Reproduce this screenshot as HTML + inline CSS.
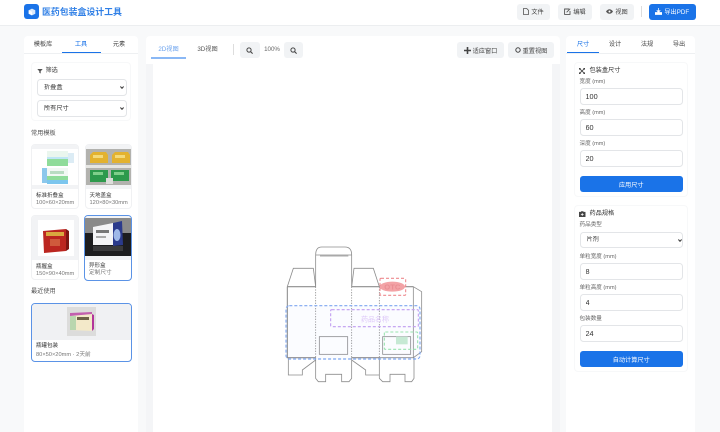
<!DOCTYPE html>
<html lang="zh"><head><meta charset="utf-8"><title>医药包装盒设计工具</title>
<style>
*{box-sizing:border-box;margin:0;padding:0}
html,body{width:720px;height:432px;overflow:hidden;background:#f8f9fa}
body{position:relative;font-family:"Liberation Sans","Noto Sans CJK SC",sans-serif;color:#333;font-size:6.2px}
#w{position:absolute;left:0;top:0;width:720px;height:432px;filter:blur(.35px)}
.a{position:absolute}
.t{position:absolute;white-space:nowrap;line-height:1}
.c{transform:translateX(-50%)}
.btn{position:absolute;background:#f1f3f5;border-radius:3px;display:flex;align-items:center;justify-content:center;gap:2px;font-size:6.2px;color:#444;white-space:nowrap}
.blue{background:#1a73e8;color:#fff;border-radius:3px}
.f{position:absolute;left:579.5px;width:103.5px;height:17px;border:1px solid #e3e5e8;border-radius:3.5px;background:#fff;font:7.3px "Liberation Sans",sans-serif;color:#333;padding-left:5px;outline:0}
select.f,select.s{appearance:none;-webkit-appearance:none;font-family:"Liberation Sans","Noto Sans CJK SC",sans-serif;font-size:6.2px}
select.f{padding-left:6px}
.s{position:absolute;left:36.5px;width:90px;height:17px;border:1px solid #e3e5e8;border-radius:3.5px;background:#fff;color:#333;padding-left:6.5px;outline:0}
.l{position:absolute;left:579.5px;font-size:5.6px;color:#666;line-height:1;white-space:nowrap}
.card{position:absolute;background:#fff;border:.7px solid #f0f1f3;border-radius:4px;overflow:hidden}
.sel{border:1px solid #5b93e6}
.n{position:absolute;font-size:5.5px;color:#333;line-height:1;white-space:nowrap;left:4px}
.d{position:absolute;font-size:5.7px;color:#777;line-height:1;white-space:nowrap;left:4px}
svg{display:block}
</style></head><body><div id="w">

<!-- header -->
<div class="a" style="left:0;top:0;width:720px;height:25.5px;background:#fff;border-bottom:1px solid #eceef0"></div>
<div class="a blue" style="left:24px;top:4px;width:14.5px;height:14.5px;border-radius:3px"></div>
<svg class="a" style="left:27.5px;top:7.5px" width="8" height="8" viewBox="0 0 8 8"><path d="M4 .6 7.3 2.2v3.6L4 7.4.7 5.8V2.2z" fill="#dbe9fb"/><path d="M4 3.8v3.6L.7 5.8V2.2z" fill="#fff"/></svg>
<div class="t" style="left:42px;top:7.5px;font-size:8.9px;font-weight:700;color:#2f7fe6">医药包装盒设计工具</div>

<div class="btn" style="left:517px;top:4px;width:33px;height:15.5px"><svg width="6" height="7" viewBox="0 0 6 7"><path d="M.5.5h3.2L5.5 2.3v4.2H.5z" fill="none" stroke="#555" stroke-width=".8"/></svg>文件</div>
<div class="btn" style="left:558px;top:4px;width:34px;height:15.5px"><svg width="7" height="7" viewBox="0 0 7 7"><path d="M5 1H.6v5.4H6V3M2.6 4.3 6.2.7" fill="none" stroke="#555" stroke-width=".9"/></svg>编辑</div>
<div class="btn" style="left:600px;top:4px;width:34px;height:15.5px"><svg width="7" height="5" viewBox="0 0 7 5"><path d="M0 2.5C2 -.5 5-.5 7 2.5 5 5.5 2 5.5 0 2.5z" fill="#555"/><circle cx="3.5" cy="2.5" r="1" fill="#fff"/></svg>视图</div>
<div class="a" style="left:641px;top:6px;width:.7px;height:11px;background:#ddd"></div>
<div class="btn blue" style="left:649px;top:3.5px;width:46.5px;height:16.5px;color:#fff"><svg width="7" height="7" viewBox="0 0 7 7"><path d="M3.5 0v4M1.7 2.4 3.5 4.4l1.8-2M.3 4.5v2h6.4v-2z" fill="#fff" stroke="#fff" stroke-width=".7"/></svg>导出PDF</div>

<!-- left panel -->
<div class="a" style="left:24px;top:36px;width:114px;height:396px;background:#fff;border-radius:4px 4px 0 0"></div>
<div class="a" style="left:24px;top:53px;width:114px;height:.8px;background:#eef0f2"></div>
<div class="t c" style="left:43px;top:41.5px;color:#444">模板库</div>
<div class="t c" style="left:81px;top:41.5px;color:#1a73e8">工具</div>
<div class="t c" style="left:119px;top:41.5px;color:#444">元素</div>
<div class="a" style="left:62px;top:52px;width:38.5px;height:1px;background:#1a73e8"></div>

<div class="a" style="left:31px;top:62px;width:100px;height:59px;background:#fff;border:.7px solid #f7f8f9;border-radius:4px"></div>
<svg class="a" style="left:37px;top:68px" width="6" height="6" viewBox="0 0 6 6"><path d="M.3 1h5.4L3.7 3.2V5.5L2.3 4.8V3.2z" fill="#555"/></svg>
<div class="t" style="left:45.5px;top:67.5px;color:#444">筛选</div>
<select class="s" style="top:78.5px"><option>折叠盒</option></select>
<select class="s" style="top:99.5px"><option>所有尺寸</option></select>
<svg class="a" style="left:120px;top:85.5px" width="4" height="3" viewBox="0 0 4 3"><path d="M.4.5 2 2.3 3.6.5" fill="none" stroke="#333" stroke-width="1"/></svg>
<svg class="a" style="left:120px;top:106.5px" width="4" height="3" viewBox="0 0 4 3"><path d="M.4.5 2 2.3 3.6.5" fill="none" stroke="#333" stroke-width="1"/></svg>

<div class="t" style="left:31px;top:130.5px;color:#555">常用模板</div>

<!-- card 1 -->
<div class="card" style="left:31px;top:144px;width:47.5px;height:65px">
 <div class="a" style="left:0;top:0;width:100%;height:44px;background:#f2f3f5"></div>
 <svg class="a" style="left:0;top:4px" width="47" height="36" viewBox="0 0 47 36"><rect width="47" height="36" fill="#fff"/>
  <rect x="15" y="2" width="21" height="15" fill="#eaf6ee"/><rect x="15" y="10" width="21" height="7" fill="#8fdc9a"/><rect x="15" y="8" width="21" height="2" fill="#bfe6f5"/>
  <rect x="36" y="4" width="6" height="10" fill="#dcecf5"/>
  <rect x="10" y="19" width="5" height="15" fill="#8cc8ec"/><rect x="15" y="19" width="21" height="16" fill="#f2f8f4"/><rect x="15" y="27" width="21" height="4" fill="#8fdc9a"/><rect x="15" y="31" width="21" height="4" fill="#7cc6ee"/><rect x="18" y="22" width="14" height="3" fill="#b9dcc2"/>
 </svg>
 <div class="n" style="top:48.5px">标准折叠盒</div><div class="d" style="top:55.5px">100×60×20mm</div>
</div>
<!-- card 2 -->
<div class="card" style="left:84.5px;top:144px;width:47px;height:65px">
 <div class="a" style="left:0;top:0;width:100%;height:44px;background:#f2f3f5"></div>
 <svg class="a" style="left:0;top:4px" width="47" height="36" viewBox="0 0 47 36"><rect width="47" height="36" fill="#b2b2ae"/><rect y="16" width="47" height="3" fill="#e6e6e3"/>
  <path d="M4 6 7 3h13l2 3v8H4z" fill="#e3b22f"/><rect x="7" y="6" width="10" height="3" fill="#f3da7a"/>
  <path d="M26 6l3-3h13l2 3v8H26z" fill="#e3b22f"/><rect x="29" y="6" width="10" height="3" fill="#f3da7a"/>
  <rect x="4" y="21" width="18" height="12" fill="#2d9a4c"/><rect x="25" y="21" width="18" height="11" fill="#2d9a4c"/><rect x="7" y="23" width="10" height="3" fill="#7fcf8a"/><rect x="28" y="23" width="10" height="3" fill="#7fcf8a"/><rect x="20" y="29" width="7" height="6" fill="#dcdeda"/></svg>
 <div class="n" style="top:48.5px">天地盖盒</div><div class="d" style="top:55.5px">120×80×30mm</div>
</div>
<!-- card 3 -->
<div class="card" style="left:31px;top:215px;width:47.5px;height:65px">
 <svg class="a" style="left:0;top:0" width="47" height="44" viewBox="0 0 47 44"><rect width="47" height="44" fill="#f2f3f5"/><rect x="6" y="4" width="36" height="36" fill="#fff"/>
  <path d="M11 15 34 13V35L12 37z" fill="#bb2620"/><path d="M34 13 37 15V33L34 35z" fill="#7c1512"/><path d="M14 16H32V20H14z" fill="#d9a93f"/><rect x="18" y="23" width="10" height="7" fill="#cf5a3c"/></svg>
 <div class="n" style="top:48.5px">瓶握盒</div><div class="d" style="top:55.5px">150×90×40mm</div>
</div>
<!-- card 4 -->
<div class="card sel" style="left:84px;top:215px;width:47.5px;height:65.5px">
 <svg class="a" style="left:0;top:0" width="46" height="44" viewBox="0 0 46 44"><rect width="46" height="44" fill="#f2f3f5"/><rect y="2" width="46" height="15" fill="#8a8a8a"/><rect y="17" width="46" height="23" fill="#1d1d1f"/><path d="M8 11 28 7v22H8z" fill="#f4f4f6"/><path d="M28 7l9-2 1 24-10 1z" fill="#2b3a8c"/><ellipse cx="32" cy="19" rx="3.5" ry="6" fill="#9fb8e8"/><rect x="11" y="14" width="13" height="3" fill="#777"/><rect x="11" y="20" width="10" height="2" fill="#aaa"/><rect x="8" y="30" width="30" height="5" fill="#3a3a3c"/></svg>
 <div class="n" style="top:48px">异形盒</div><div class="d" style="top:55px">定制尺寸</div>
</div>

<div class="t" style="left:31px;top:289px;color:#555">最近使用</div>
<!-- recent -->
<div class="card sel" style="left:31px;top:303px;width:100.5px;height:59px">
 <div class="a" style="left:0;top:0;width:100%;height:36px;background:#f0f1f3"></div>
 <svg class="a" style="left:35px;top:3px" width="29" height="29" viewBox="0 0 29 29"><rect width="29" height="29" fill="#dcdcdb"/><path d="M3 9 25 7V24L3 23z" fill="#f3e9c9"/><path d="M3 9H9V23H3z" fill="#b9d6ae"/><rect x="10" y="10" width="12" height="3" fill="#6e6248"/><path d="M25 7 27 8V22L25 24z" fill="#b3359a"/><path d="M3 6 25 5V7L3 9z" fill="#c25fae"/></svg>
 <div class="n" style="top:40px">瓶罐包装</div><div class="d" style="top:48.5px">80×50×20mm · 2天前</div>
</div>

<!-- center -->
<div class="a" style="left:146px;top:36px;width:414px;height:396px;background:#f4f5f7;border-radius:4px 4px 0 0"></div>
<div class="a" style="left:146px;top:36px;width:414px;height:28px;background:#fff;border-radius:4px 4px 0 0"></div>
<div class="a" style="left:153px;top:64px;width:399px;height:368px;background:#fff"></div>
<div class="t c" style="left:168.5px;top:46.5px;color:#6aa2ee">2D视图</div>
<div class="t c" style="left:207.5px;top:46.5px;color:#555">3D视图</div>
<div class="a" style="left:151px;top:57px;width:35px;height:1.5px;background:#8ab8f5"></div>
<div class="a" style="left:232.5px;top:44px;width:.7px;height:11px;background:#ddd"></div>
<div class="btn" style="left:240px;top:42px;width:19.5px;height:16px"><svg width="7" height="7" viewBox="0 0 7 7"><circle cx="3" cy="3" r="2.1" fill="none" stroke="#444" stroke-width="1"/><path d="M4.6 4.6 6.6 6.6" stroke="#444" stroke-width="1.1"/></svg></div>
<div class="t c" style="left:272px;top:47px;color:#666">100%</div>
<div class="btn" style="left:283.5px;top:42px;width:19.5px;height:16px"><svg width="7" height="7" viewBox="0 0 7 7"><circle cx="3" cy="3" r="2.1" fill="none" stroke="#444" stroke-width="1"/><path d="M4.6 4.6 6.6 6.6" stroke="#444" stroke-width="1.1"/></svg></div>
<div class="btn" style="left:457px;top:42px;width:47px;height:16px"><svg width="7" height="7" viewBox="0 0 7 7"><path d="M3.5 0v7M0 3.5h7" stroke="#444" stroke-width="1.6"/></svg>适应窗口</div>
<div class="btn" style="left:508px;top:42px;width:46px;height:16px"><svg width="6" height="6" viewBox="0 0 6 6"><circle cx="3" cy="3" r="2.2" fill="none" stroke="#444" stroke-width="1"/></svg>重置视图</div>

<!-- dieline -->
<svg class="a" style="left:270px;top:235px" width="170" height="150" viewBox="0 0 510 450">
 <g fill="none" stroke="#8d8d8d" stroke-width="2.4">
  <path d="M52 155H137M245 155H328M52 155V368H137M245 368H328M430 155H328" stroke-width="3.2"/>
  <path d="M137 155V60Q137 36 155 36H225Q245 36 245 60V155"/>
  <path d="M137 60H245M150 63H235"/>
  <path d="M52 155 70 100H130L137 155"/>
  <path d="M245 155 252 100H310L328 155"/>
  <path d="M430 155 455 170V350L430 368"/>
  <path d="M430 155V368H328"/>
  <path d="M55 368V420H97V405L137 375"/>
  <path d="M137 368V430L145 440H167V418H215V440H237L245 430V368"/>
  <path d="M245 375 287 405V420H328"/>
  <path d="M328 368V430L338 440H360V418H405V440H425L432 430V368"/>
  <rect x="148" y="305" width="85" height="53"/>
  <rect x="338" y="305" width="84" height="53"/>
  <g stroke-dasharray="4 4"><path d="M137 155V368M245 155V368M328 155V368"/></g>
 </g>
 <rect x="378" y="305" width="35" height="23" fill="#c9ecd3"/>
 <rect x="48" y="212" width="402" height="160" rx="10" fill="#7fa8f0" fill-opacity=".03" stroke="#7ea6f0" stroke-width="3.4" stroke-dasharray="9 6"/>
 <rect x="182" y="224" width="263" height="51" rx="3" fill="none" stroke="#c09cf0" stroke-width="3.2" stroke-dasharray="9 6"/>
 <rect x="343" y="291" width="100" height="52" rx="3" fill="none" stroke="#98e3ae" stroke-width="3.2" stroke-dasharray="9 6"/>
 <ellipse cx="367" cy="155" rx="38" ry="15" fill="#f3a3a6"/>
 <rect x="330" y="130" width="77" height="51" rx="3" fill="none" stroke="#ee8a8f" stroke-width="3.2" stroke-dasharray="9 6"/>
 <text x="367" y="163" text-anchor="middle" font-family="Liberation Sans,sans-serif" font-size="23" font-weight="700" fill="#e98e93">OTC</text>
 <text x="315" y="260" text-anchor="middle" font-family="Liberation Sans,Noto Sans CJK SC,sans-serif" font-size="21" fill="#dcc6f8">药品名称</text>
</svg>

<!-- right panel -->
<div class="a" style="left:566px;top:36px;width:129px;height:396px;background:#fff;border-radius:4px 4px 0 0"></div>
<div class="a" style="left:566px;top:53px;width:129px;height:.8px;background:#eef0f2"></div>
<div class="t c" style="left:583px;top:41.5px;color:#1a73e8">尺寸</div>
<div class="t c" style="left:615px;top:41.5px;color:#444">设计</div>
<div class="t c" style="left:647px;top:41.5px;color:#444">法规</div>
<div class="t c" style="left:679px;top:41.5px;color:#444">导出</div>
<div class="a" style="left:566.5px;top:52px;width:32.5px;height:1px;background:#1a73e8"></div>

<div class="a" style="left:574px;top:62px;width:114px;height:135px;background:#fff;border:.7px solid #f7f8f9;border-radius:4px"></div>
<svg class="a" style="left:579px;top:67.5px" width="6" height="6" viewBox="0 0 7 7"><path d="M.5.5 6.5 6.5M6.5.5.5 6.5" stroke="#444" stroke-width="1"/><path d="M0 0h2.4L0 2.4zM7 0v2.4L4.6 0zM0 7V4.6L2.4 7zM7 7H4.6L7 4.6z" fill="#444"/></svg>
<div class="t" style="left:589.5px;top:67.5px;color:#333">包装盒尺寸</div>
<div class="l" style="top:79.5px">宽度 (mm)</div>
<input class="f" style="top:87.5px" value="100">
<div class="l" style="top:110.5px">高度 (mm)</div>
<input class="f" style="top:118.5px" value="60">
<div class="l" style="top:142px">深度 (mm)</div>
<input class="f" style="top:150px" value="20">
<div class="a blue" style="left:579.5px;top:176px;width:103.5px;height:16px;display:flex;align-items:center;justify-content:center;font-size:6.2px">应用尺寸</div>

<div class="a" style="left:574px;top:205px;width:114px;height:167px;background:#fff;border:.7px solid #f7f8f9;border-radius:4px"></div>
<svg class="a" style="left:579px;top:211px" width="6.5" height="6" viewBox="0 0 7 6.5"><path d="M2.2 1V.3h2.6V1H7v5.5H0V1z" fill="#444"/><path d="M3.5 2.3v3M2 3.8h3" stroke="#fff" stroke-width=".8"/></svg>
<div class="t" style="left:589.5px;top:211px;color:#333">药品规格</div>
<div class="l" style="top:223px">药品类型</div>
<select class="f" style="top:231.5px;height:16.5px"><option>片剂</option></select>
<svg class="a" style="left:677.5px;top:238.5px" width="4" height="3" viewBox="0 0 4 3"><path d="M.4.5 2 2.3 3.6.5" fill="none" stroke="#333" stroke-width="1"/></svg>
<div class="l" style="top:254.5px">单粒宽度 (mm)</div>
<input class="f" style="top:262.5px" value="8">
<div class="l" style="top:285.5px">单粒高度 (mm)</div>
<input class="f" style="top:293.5px" value="4">
<div class="l" style="top:316.5px">包装数量</div>
<input class="f" style="top:325px" value="24">
<div class="a blue" style="left:579.5px;top:351px;width:103.5px;height:16px;display:flex;align-items:center;justify-content:center;font-size:6.2px">自动计算尺寸</div>
</div></body></html>
